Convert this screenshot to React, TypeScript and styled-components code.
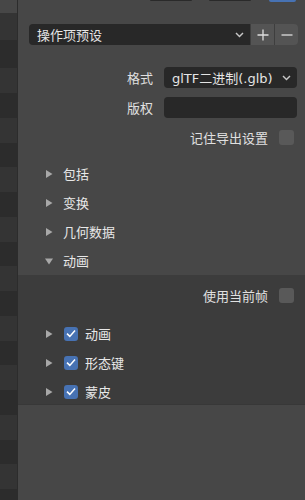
import styled, { createGlobalStyle } from 'styled-components';

const GlobalStyle = createGlobalStyle`
  html, body {
    margin: 0;
    padding: 0;
    background: #474747;
  }
  #root {
    width: 305px;
    height: 500px;
    overflow: hidden;
  }
`;

const FONT = `"DejaVu Sans", "Noto Sans CJK SC", sans-serif`;

const Shell = styled.div`
  display: flex;
  width: 305px;
  height: 500px;
  background: #474747;
  font-family: ${FONT};
  font-size: 13px;
  color: #e6e6e6;
`;

const FileList = styled.div`
  width: 17px;
  padding-top: 13px;
  display: flex;
  flex-direction: column;
  border-right: 1px solid #2c2c2c;
  overflow: hidden;
`;

const Stripe = styled.div<{ $dark: boolean; $h: number }>`
  flex: none;
  height: ${(p) => p.$h}px;
  background: ${(p) => (p.$dark ? '#2c2c2c' : '#343434')};
`;

const Main = styled.div`
  flex: 1;
  display: flex;
  flex-direction: column;
  min-width: 0;
`;

const TopEdge = styled.div`
  display: flex;
  height: 2px;
  padding-left: 132px;
`;

const EdgeButton = styled.div<{ $w: number; $gap: number; $blue?: boolean }>`
  width: ${(p) => p.$w}px;
  margin-right: ${(p) => p.$gap}px;
  height: ${(p) => (p.$blue ? 2 : 1)}px;
  background: ${(p) => (p.$blue ? '#4772b3' : '#2a2a2a')};
  border-radius: 0 0 3px 3px;
`;

const PresetRow = styled.div`
  display: flex;
  height: 21px;
  margin: 22px 7px 0 11px;
`;

const Dropdown = styled.div<{ $attached?: boolean }>`
  flex: 1;
  display: flex;
  align-items: center;
  justify-content: space-between;
  padding: 0 6px 0 8px;
  background: #282828;
  border-radius: ${(p) => (p.$attached ? '4px 0 0 4px' : '4px')};
  box-sizing: border-box;
  height: 100%;
`;

const DropText = styled.span`
  white-space: nowrap;
  color: #e4e4e4;
`;

const IconButton = styled.div<{ $last?: boolean }>`
  width: 23px;
  height: 100%;
  display: flex;
  align-items: center;
  justify-content: center;
  background: #545454;
  border-left: 1px solid #3e3e3e;
  border-radius: ${(p) => (p.$last ? '0 4px 4px 0' : '0')};
`;

const FieldRow = styled.div<{ $top: number }>`
  display: flex;
  align-items: center;
  height: 21px;
  margin: ${(p) => p.$top}px 8px 0 0;
`;

const FieldLabel = styled.span`
  width: 135px;
  text-align: right;
  padding-right: 11px;
  flex: none;
  color: #e0e0e0;
`;

const Field = styled.div`
  flex: 1;
  height: 100%;
`;

const ToggleRow = styled.div<{ $top: number }>`
  display: flex;
  align-items: center;
  justify-content: flex-end;
  gap: 11px;
  height: 20px;
  margin: ${(p) => p.$top}px 11px 0 0;
  color: #e0e0e0;
`;

const Box = styled.div<{ $on?: boolean }>`
  flex: none;
  width: 15px;
  height: 15px;
  border-radius: 3px;
  box-sizing: border-box;
  background: ${(p) => (p.$on ? '#4772b3' : '#595959')};
  display: flex;
  align-items: center;
  justify-content: center;
`;

const Sections = styled.div`
  display: flex;
  flex-direction: column;
  margin-top: 12px;
`;

const Header = styled.div`
  display: flex;
  align-items: center;
  height: 29px;
  padding-left: 27px;
  gap: 10px;
  color: #e8e8e8;
`;

const SubPanel = styled.div`
  display: flex;
  flex-direction: column;
  background: #3c3c3c;
  height: 130px;
  border-bottom: 1px solid #383838;
  box-sizing: border-box;
  padding-top: 11px;
`;

const SubList = styled.div`
  display: flex;
  flex-direction: column;
  margin-top: 14px;
`;

const SubRow = styled.div`
  display: flex;
  align-items: center;
  height: 29px;
  padding-left: 27px;
  color: #e8e8e8;
`;

const SubBox = styled(Box)`
  width: 14px;
  height: 14px;
  margin: 0 7px 0 11px;
`;

function Arrow({ open }: { open?: boolean }) {
  return (
    <svg width="8" height="8" viewBox="0 0 8 8" style={{ flex: 'none' }}>
      {open ? (
        <polygon points="0,1.5 8,1.5 4,7.5" fill="#a8a8a8" />
      ) : (
        <polygon points="1,0 7.5,4 1,8" fill="#a8a8a8" />
      )}
    </svg>
  );
}

function Chevron() {
  return (
    <svg width="9" height="6" viewBox="0 0 9 6">
      <polyline points="1,1 4.5,4.6 8,1" fill="none" stroke="#c8c8c8" strokeWidth="1.4" />
    </svg>
  );
}

function Check() {
  return (
    <svg width="10" height="9" viewBox="0 0 10 9">
      <polyline points="1,4.6 3.8,7.4 9,1.4" fill="none" stroke="#ffffff" strokeWidth="1.5" />
    </svg>
  );
}

const stripeHeights = [27, 28, 25, 25, 25, 24, 25, 25, 25, 24, 25, 25, 25, 24, 25, 25, 25, 24, 25, 25];

const sections = ['包括', '变换', '几何数据'];
const animItems = ['动画', '形态键', '蒙皮'];

export default function App() {
  return (
    <>
      <GlobalStyle />
      <Shell>
        <FileList>
          {stripeHeights.map((h, i) => (
            <Stripe key={i} $h={h} $dark={i % 2 === 1} />
          ))}
        </FileList>
        <Main>
          <TopEdge>
            <EdgeButton $w={42} $gap={17} />
            <EdgeButton $w={42} $gap={18} />
            <EdgeButton $w={27} $gap={0} $blue />
          </TopEdge>

          <PresetRow>
            <Dropdown $attached>
              <DropText>操作项预设</DropText>
              <Chevron />
            </Dropdown>
            <IconButton>
              <svg width="12" height="12" viewBox="0 0 12 12">
                <path d="M6 0.5V11.5M0.5 6H11.5" stroke="#dedede" strokeWidth="1.3" />
              </svg>
            </IconButton>
            <IconButton $last>
              <svg width="12" height="12" viewBox="0 0 12 12">
                <path d="M0.5 6H11.5" stroke="#dedede" strokeWidth="1.3" />
              </svg>
            </IconButton>
          </PresetRow>

          <FieldRow $top={22}>
            <FieldLabel>格式</FieldLabel>
            <Field>
              <Dropdown>
                <DropText>glTF二进制(.glb)</DropText>
                <Chevron />
              </Dropdown>
            </Field>
          </FieldRow>

          <FieldRow $top={9}>
            <FieldLabel>版权</FieldLabel>
            <Field>
              <Dropdown />
            </Field>
          </FieldRow>

          <ToggleRow $top={9}>
            <span>记住导出设置</span>
            <Box />
          </ToggleRow>

          <Sections>
            {sections.map((s) => (
              <Header key={s}>
                <Arrow />
                <span>{s}</span>
              </Header>
            ))}
            <Header>
              <Arrow open />
              <span>动画</span>
            </Header>
            <SubPanel>
              <ToggleRow $top={0}>
                <span>使用当前帧</span>
                <Box />
              </ToggleRow>
              <SubList>
                {animItems.map((a) => (
                  <SubRow key={a}>
                    <Arrow />
                    <SubBox $on>
                      <Check />
                    </SubBox>
                    <span>{a}</span>
                  </SubRow>
                ))}
              </SubList>
            </SubPanel>
          </Sections>
        </Main>
      </Shell>
    </>
  );
}
